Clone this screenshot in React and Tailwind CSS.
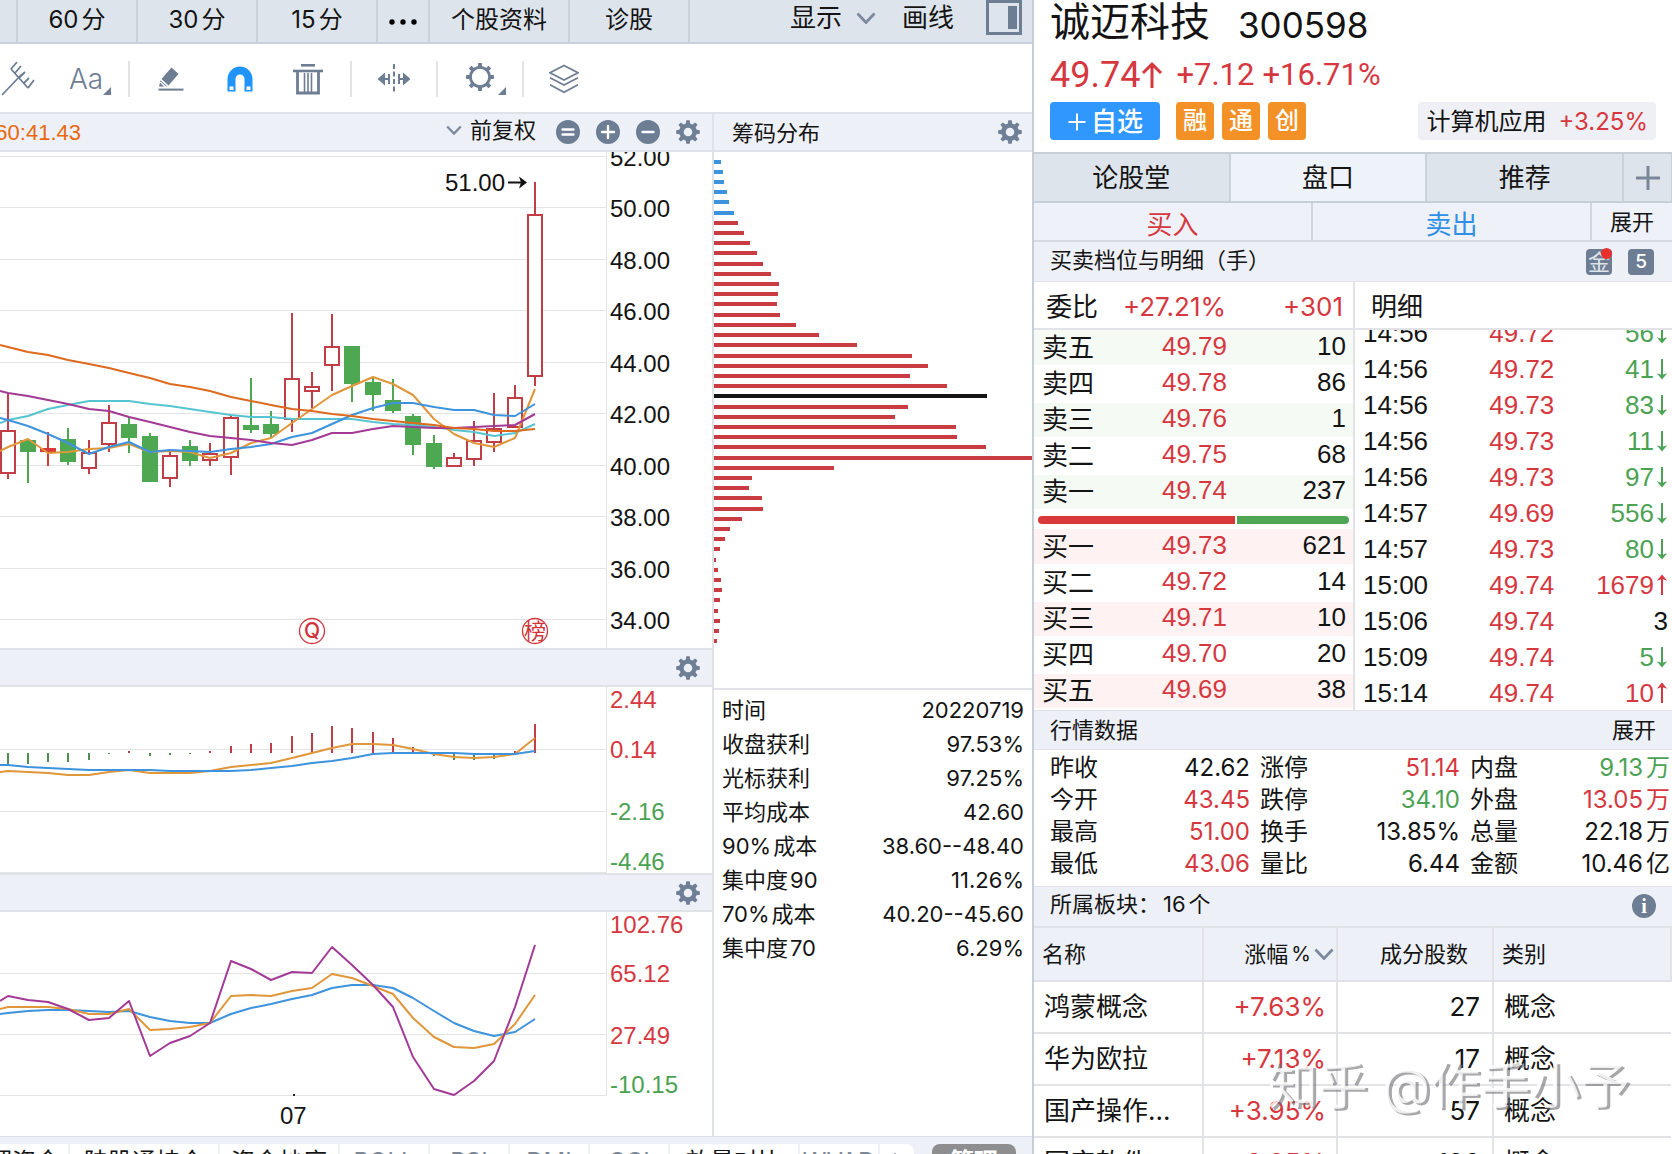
import React from "react";

const XS = [8, 28, 48, 68, 89, 109, 129, 150, 170, 190, 210, 231, 251, 271, 292, 312, 332, 352, 373, 393, 413, 434, 454, 474, 494, 515, 535];

// kind, high, low, body top, body bottom
const CANDLES = [
  ["r", 394, 479, 430, 474],
  ["g", 440, 483, 440, 452],
  ["f", 432, 466, 448, 452],
  ["g", 428, 465, 439, 462],
  ["r", 440, 474, 452, 469],
  ["r", 405, 452, 422, 445],
  ["g", 417, 453, 424, 438],
  ["g", 433, 482, 436, 482],
  ["r", 452, 487, 455, 479],
  ["g", 440, 466, 446, 461],
  ["r", 443, 466, 453, 461],
  ["r", 415, 475, 417, 458],
  ["g", 378, 433, 425, 430],
  ["g", 411, 437, 424, 434],
  ["r", 313, 432, 378, 420],
  ["r", 372, 408, 386, 392],
  ["r", 314, 391, 346, 366],
  ["g", 346, 402, 346, 384],
  ["g", 378, 411, 382, 395],
  ["g", 379, 413, 400, 411],
  ["g", 414, 455, 416, 445],
  ["g", 435, 469, 443, 467],
  ["r", 453, 467, 457, 467],
  ["r", 421, 466, 440, 460],
  ["r", 393, 452, 428, 443],
  ["r", 385, 428, 397, 428],
  ["r", 182, 386, 214, 377],
];

const MA = [
  ["#56c4d0", 423, [420, 416, 409, 405, 401, 401, 401, 404, 406, 409, 412, 415, 417, 417, 419, 419, 419, 419, 422, 424, 425, 427, 430, 432, 436, 433, 424]],
  ["#e0963a", 451, [447, 439, 453, 452, 449, 448, 444, 452, 451, 452, 458, 453, 443, 438, 423, 409, 395, 386, 377, 384, 395, 419, 434, 443, 447, 438, 389]],
  ["#3d93dd", 418, [420, 426, 434, 443, 454, 447, 442, 452, 450, 451, 452, 449, 447, 444, 437, 433, 424, 415, 408, 403, 403, 407, 410, 410, 415, 416, 404]],
  ["#a23a96", 391, [393, 396, 400, 404, 409, 411, 417, 422, 427, 432, 436, 438, 440, 443, 445, 440, 433, 433, 429, 426, 427, 428, 428, 427, 426, 425, 414]],
  ["#dd6a1f", 345, [347, 352, 355, 360, 364, 368, 373, 378, 384, 387, 391, 397, 401, 405, 409, 411, 414, 416, 419, 421, 423, 425, 428, 429, 431, 431, 429]],
];

const MACD_BARS = [765, 764, 762, 762, 760, 754, 751, 756, 755, 754, 751, 746, 744, 743, 736, 733, 726, 728, 732, 738, 747, 756, 760, 760, 759, 751, 724];
const MACD = [
  ["#e0963a", 772, [771, 772, 773, 775, 775, 772, 770, 773, 773, 773, 771, 767, 765, 763, 758, 753, 748, 744, 744, 745, 749, 754, 757, 758, 757, 754, 738]],
  ["#3d93dd", 765, [765, 767, 768, 769, 770, 770, 770, 770, 771, 771, 771, 771, 770, 768, 766, 763, 761, 758, 754, 753, 753, 753, 753, 754, 754, 754, 751]],
];

const KDJ = [
  ["#3d93dd", 1014, [1013, 1011, 1010, 1010, 1011, 1012, 1011, 1017, 1021, 1023, 1023, 1014, 1008, 1004, 999, 995, 988, 985, 985, 988, 998, 1011, 1023, 1031, 1036, 1032, 1019]],
  ["#e0963a", 1009, [1007, 1007, 1007, 1009, 1014, 1014, 1009, 1030, 1029, 1027, 1023, 996, 995, 996, 991, 988, 974, 978, 986, 994, 1018, 1037, 1047, 1048, 1044, 1024, 995]],
  ["#a23a96", 1001, [996, 1000, 1002, 1009, 1020, 1018, 1001, 1056, 1043, 1036, 1023, 961, 969, 980, 972, 973, 947, 965, 985, 1007, 1057, 1089, 1095, 1081, 1061, 1007, 945]],
];

const CHIPS = [
  [162, 7], [172, 9], [182, 10], [192, 13], [202, 15], [213, 20], [223, 24], [233, 30], [243, 36], [253, 43], [264, 49],
  [274, 57], [284, 65], [294, 64], [304, 63], [315, 66], [325, 82], [335, 105], [345, 143], [356, 198], [366, 214], [376, 196],
  [386, 233], [396, 273], [407, 194], [417, 181], [427, 242], [437, 243], [447, 272], [458, 319], [468, 120], [478, 38],
  [488, 35], [498, 48], [509, 49], [519, 28], [529, 16], [539, 11], [549, 6], [560, 2], [570, 4], [580, 7], [590, 8],
  [600, 6], [611, 4], [621, 6], [631, 5], [641, 3],
];

const SELLS = [["卖五", "49.79", "10"], ["卖四", "49.78", "86"], ["卖三", "49.76", "1"], ["卖二", "49.75", "68"], ["卖一", "49.74", "237"]];
const BUYS = [["买一", "49.73", "621"], ["买二", "49.72", "14"], ["买三", "49.71", "10"], ["买四", "49.70", "20"], ["买五", "49.69", "38"]];
const TICKS = [
  ["14:56", "49.72", "56", "d"], ["14:56", "49.72", "41", "d"], ["14:56", "49.73", "83", "d"], ["14:56", "49.73", "11", "d"],
  ["14:56", "49.73", "97", "d"], ["14:57", "49.69", "556", "d"], ["14:57", "49.73", "80", "d"], ["15:00", "49.74", "1679", "u"],
  ["15:06", "49.74", "3", ""], ["15:09", "49.74", "5", "d"], ["15:14", "49.74", "10", "u"],
];
const RED = "text-[#d6383f]";
const GREEN = "text-[#4ba253]";
const QUOTES = [
  ["昨收", "42.62", "", "", "涨停", "51.14", "", RED, "内盘", "9.13", "万", GREEN],
  ["今开", "43.45", "", RED, "跌停", "34.10", "", GREEN, "外盘", "13.05", "万", RED],
  ["最高", "51.00", "", RED, "换手", "13.85%", "", "", "总量", "22.18", "万", ""],
  ["最低", "43.06", "", RED, "量比", "6.44", "", "", "金额", "10.46", "亿", ""],
];
const STATS = [
  ["", "时间", "", "20220719"], ["", "收盘获利", "", "97.53%"], ["", "光标获利", "", "97.25%"], ["", "平均成本", "", "42.60"],
  ["90%", "成本", "", "38.60--48.40"], ["", "集中度", "90", "11.26%"], ["70%", "成本", "", "40.20--45.60"], ["", "集中度", "70", "6.29%"],
];
const SECTORS = [["鸿蒙概念", "+7.63%", "27"], ["华为欧拉", "+7.13%", "17"], ["国产操作...", "+3.95%", "57"], ["国产软件", "+3.85%", "186"]];

function Lines({ data }) {
  return data.map(([color, start, ys], i) => (
    <polyline key={i} fill="none" stroke={color} strokeWidth="2" strokeLinejoin="round"
      points={`0,${start} ` + ys.map((y, k) => `${XS[k]},${y}`).join(" ")} />
  ));
}

function Grid({ ys }) {
  return ys.map((y) => <line key={y} x1="0" x2="606" y1={y} y2={y} stroke="#e2e4e6" />);
}

function Gear({ className }) {
  return (
    <svg viewBox="0 0 24 24" className={className} aria-hidden="true">
      <circle cx="12" cy="12" r="6.5" fill="none" stroke="#6f7f96" strokeWidth="4.4" />
      {[0, 45, 90, 135, 180, 225, 270, 315].map((a) => (
        <path key={a} d="M10.3 0.2h3.4l0.7 4.2h-4.8z" fill="#6f7f96" transform={`rotate(${a} 12 12)`} />
      ))}
    </svg>
  );
}

function Chevron({ className }) {
  return (
    <svg viewBox="0 0 20 12" className={className} aria-hidden="true">
      <path d="M1.5 1.5 10 10.5 18.5 1.5" fill="none" stroke="#7c8aa0" strokeWidth="2.8" />
    </svg>
  );
}

function Disc({ label, children }) {
  return (
    <button aria-label={label} className="size-6">
      <svg viewBox="0 0 24 24" className="size-6">
        <circle cx="12" cy="12" r="12" fill="#6d7d94" />
        <g stroke="#fff" strokeWidth="2.4" strokeLinecap="round">{children}</g>
      </svg>
    </button>
  );
}

function Arrow({ up }) {
  return (
    <svg viewBox="0 0 12 22" className="h-[22px] w-3 shrink-0" aria-hidden="true">
      <g transform={up ? "rotate(180 6 11)" : undefined} fill="currentColor">
        <rect x="5" y="1" width="2" height="18" />
        <path d="M0.8 15.2 6 17l5.200-1.800L6 21.500z" />
      </g>
    </svg>
  );
}

function TopTab({ children, className }) {
  return <button className={"flex h-full shrink-0 items-center justify-center border-r-2 border-[#c9d1da] pb-0.5 " + className}>{children}</button>;
}

function Corner() {
  return (
    <svg viewBox="0 0 8 8" className="mt-6 size-2" aria-hidden="true"><path d="M8 0v8H0z" fill="#6d7d94" /></svg>
  );
}

function Toolbar() {
  const g = "#6d7d94";
  return (
    <div className="flex h-[68px] shrink-0 items-center pt-px pl-px">
      <button aria-label="音叉线">
        <svg viewBox="0 0 34 36" className="h-9 w-[34px]" fill="none" stroke={g} strokeWidth="1.800">
          <path d="M1 34 21 13M10 8 27 27M10 8l6-7M14 12l6-7M18 17l6-6M23 22l5-5M27 27l6-8" />
        </svg>
      </button>
      <button className="ml-[34px] flex items-center text-[#6d7d94]" aria-label="文字">
        <span className="font-['Inter'] text-[28px] leading-none font-light">Aa</span>
        <Corner />
      </button>
      <span className="ml-[17px] h-9 w-0.5 bg-[#e1e3e7]" />
      <button className="ml-7" aria-label="橡皮擦">
        <svg viewBox="0 0 26 26" className="size-[26px]">
          <path d="M13.500 1.500 20.500 8 10.500 19.500 3.500 13z" fill={g} />
          <path d="M2.500 14.200 9.300 20.600H1z" fill={g} />
          <path d="M2.200 16 7.800 21.200" stroke="#fff" strokeWidth="1.300" />
          <rect x="0.500" y="22.600" width="25" height="2" fill={g} />
        </svg>
      </button>
      <button className="ml-[43px]" aria-label="磁铁">
        <svg viewBox="0 0 26 26" className="size-[26px]">
          <path d="M0.500 25.500V13a12.500 12.500 0 0 1 25 0v12.500h-8V13a4.500 4.500 0 0 0-9 0v12.500z" fill="#2094fb" />
          <path d="M2.500 20.500h4v3.500h-4zM19.500 20.500h4v3.500h-4z" fill="#fff" />
        </svg>
      </button>
      <button className="ml-10" aria-label="删除">
        <svg viewBox="0 0 30 32" className="h-8 w-[30px]" fill="none" stroke={g}>
          <path d="M8 2.300h14" strokeWidth="2.600" />
          <path d="M0 8h30" strokeWidth="2.600" />
          <path d="M4.500 8v22h21V8" strokeWidth="2.800" />
          <path d="M11.500 10v19M15 10v19M18.500 10v19" strokeWidth="1.600" />
        </svg>
      </button>
      <span className="ml-[27px] h-9 w-0.5 bg-[#e1e3e7]" />
      <button className="ml-[25px]" aria-label="缩放">
        <svg viewBox="0 0 34 32" className="h-8 w-[34px]">
          <path d="M0.500 16 8 9.500v13zM33.500 16 26 9.500v13z" fill={g} />
          <path d="M7 16h5.500M21.500 16h5.500M12 11v10M22 11v10" stroke={g} strokeWidth="2" fill="none" />
          <path d="M17 1v30" stroke={g} strokeWidth="2" strokeDasharray="5 2.500" />
        </svg>
      </button>
      <span className="ml-[25px] h-9 w-0.5 bg-[#e1e3e7]" />
      <button className="ml-7 flex items-center" aria-label="设置">
        <svg viewBox="0 0 28 28" className="mb-1 size-7">
          <circle cx="14" cy="14" r="9.600" fill="none" stroke={g} strokeWidth="2.800" />
          {[0, 45, 90, 135, 180, 225, 270, 315].map((a) => (
            <rect key={a} x="12" y="0" width="4" height="4" rx="0.800" fill={g} transform={`rotate(${a} 14 14)`} />
          ))}
        </svg>
        <span className="w-1" />
        <Corner />
      </button>
      <span className="ml-4 h-9 w-0.5 bg-[#e1e3e7]" />
      <button className="ml-[25px]" aria-label="图层">
        <svg viewBox="0 0 30 30" className="size-[30px]" fill="none" stroke={g} strokeWidth="1.700">
          <path d="M15 1.500 29 8.800 15 16 1 8.800z" />
          <path d="M1 13.800 15 21l14-7.200" />
          <path d="M1 20.800 15 28.200l14-7.400" />
        </svg>
      </button>
    </div>
  );
}

function SubHeader() {
  return (
    <div className="flex h-[39px] shrink-0 items-center justify-end border-y-2 border-[#dfe3e8] bg-[#edf0f6] pr-3">
      <button aria-label="指标设置"><Gear className="size-6" /></button>
    </div>
  );
}

function Axis({ labels }) {
  return (
    <div className="w-[105px] shrink-0 pt-px pl-[3px] font-['Liberation_Sans'] text-2xl leading-6">
      {labels.map(([t, c]) => <div key={t} className={c}>{t}</div>)}
    </div>
  );
}

function Charts() {
  return (
    <section className="flex min-w-0 flex-1 flex-col">
      <div className="flex h-10 shrink-0 items-center justify-between border-y-2 border-[#dfe3e8] bg-[#edf0f6] pr-3">
        <div className="flex w-[81px] justify-end overflow-hidden font-['Liberation_Sans'] text-[22px] whitespace-nowrap text-[#e8690f]">MA60:41.43</div>
        <div className="flex items-center gap-4">
          <button className="flex items-center gap-2 pr-1 pb-1 text-[22px] leading-8"><Chevron className="h-2.5 w-4" />前复权</button>
          <Disc label="还原"><path d="M6.500 9.500h11M6.500 14.500h11" /></Disc>
          <Disc label="放大"><path d="M6 12h12M12 6v12" /></Disc>
          <Disc label="缩小"><path d="M6.500 12h11" /></Disc>
          <button aria-label="设置"><Gear className="size-6" /></button>
        </div>
      </div>
      <div className="flex h-[496px] shrink-0">
        <svg viewBox="0 152 606 496" preserveAspectRatio="none" className="h-full min-w-0 flex-1 border-r border-[#e2e4e6]" role="img" aria-label="日K线图">
          <Grid ys={[156.5, 207.5, 259.5, 310.5, 362.5, 413.5, 465.5, 516.5, 568.5, 619.5]} />
          {CANDLES.map(([k, hi, lo, t, b], i) => {
            const x = XS[i];
            const c = k === "g" ? "#4ea852" : k === "f" ? "#d93a35" : "#c23d46";
            return (
              <g key={i}>
                <line x1={x} x2={x} y1={hi} y2={lo} stroke={c} strokeWidth="2" />
                {k === "r"
                  ? <rect x={x - 7} y={t + 1} width="14" height={b - t - 2} fill="#fff" stroke={c} strokeWidth="2" />
                  : <rect x={x - 8} y={t} width="16" height={b - t} fill={c} />}
              </g>
            );
          })}
          <Lines data={MA} />
          <text x="445" y="191" fontFamily="Liberation Sans" fontSize="24" fill="#111">51.00</text>
          <path d="M508 182.500h14" stroke="#111" strokeWidth="2" />
          <path d="M519 176.500 527 182.500 519 188.500 521 182.500z" fill="#111" />
          {[[312, "Q", 21], [535, "榜", 22]].map(([x, t, s]) => (
            <g key={t} fill="#d2343c">
              <circle cx={x} cy="631" r="12.500" fill="#fff" stroke="#d2343c" strokeWidth="1.300" />
              <text x={x} y={t === "Q" ? 638 : 639} textAnchor="middle" fontFamily="Inter, 'Noto Sans CJK SC', sans-serif" fontWeight={t === "Q" ? 500 : 400} fontSize={s}>{t}</text>
            </g>
          ))}
        </svg>
        <div className="w-[105px] shrink-0 overflow-hidden pl-[3px] font-['Liberation_Sans'] text-2xl leading-6">
          <div className="-mt-1.5 flex h-[487px] flex-col justify-between">
            {["52.00", "50.00", "48.00", "46.00", "44.00", "42.00", "40.00", "38.00", "36.00", "34.00"].map((v) => <div key={v}>{v}</div>)}
          </div>
        </div>
      </div>
      <SubHeader />
      <div className="flex h-[186px] shrink-0">
        <svg viewBox="0 687 606 186" preserveAspectRatio="none" className="h-full min-w-0 flex-1 border-r border-[#e2e4e6]" role="img" aria-label="MACD">
          <Grid ys={[749.5, 811.5, 872.5]} />
          {MACD_BARS.map((y, i) => (
            <line key={i} x1={XS[i]} x2={XS[i]} y1="753" y2={y} stroke={y > 753 ? "#4c8f4e" : "#c23d46"} strokeWidth="2" />
          ))}
          <Lines data={MACD} />
        </svg>
        <Axis labels={[["2.44", RED], ["0.14", RED + " mt-[26px]"], ["-2.16", GREEN + " mt-[38px]"], ["-4.46", GREEN + " mt-[26px]"]]} />
      </div>
      <SubHeader />
      <div className="flex h-[184px] shrink-0">
        <svg viewBox="0 912 606 184" preserveAspectRatio="none" className="h-full min-w-0 flex-1 border-r border-[#e2e4e6]" role="img" aria-label="KDJ">
          <Grid ys={[973.5, 1034.5, 1095.5]} />
          <Lines data={KDJ} />
          <rect x="293" y="1094" width="2" height="2" fill="#222" />
        </svg>
        <Axis labels={[["102.76", RED], ["65.12", RED + " mt-[25px]"], ["27.49", RED + " mt-[38px]"], ["-10.15", GREEN + " mt-[25px]"]]} />
      </div>
      <div className="flex h-10 shrink-0 items-center pl-[280px] font-['Liberation_Sans'] text-2xl">07</div>
    </section>
  );
}

function ChipPanel() {
  return (
    <section className="flex w-80 shrink-0 flex-col border-l-2 border-[#dfe3e8]">
      <div className="flex h-10 shrink-0 items-center justify-between border-y-2 border-[#dfe3e8] bg-[#edf0f6] pr-2.5 pl-[18px]">
        <h2 className="pt-0.5 text-[22px] leading-8">筹码分布</h2>
        <button aria-label="筹码设置"><Gear className="size-6" /></button>
      </div>
      <svg viewBox="0 152 318 536" preserveAspectRatio="none" className="h-[536px] w-full shrink-0" role="img" aria-label="筹码分布图">
        {CHIPS.map(([y, w]) => (
          <rect key={y} x="0" y={y - 2} width={w} height="4" fill={y < 218 ? "#3d93dd" : y === 396 ? "#151515" : "#c93c42"} />
        ))}
      </svg>
      <dl className="border-t-2 border-[#dfe3e8] pt-[3px] pr-2 pl-2">
        {STATS.map(([pre, name, post, value]) => (
          <div key={pre + name + post} className="flex h-[34px] items-center justify-between">
            <dt className="flex items-center gap-0.5 text-[22px] leading-8">
              {pre && <span>{pre}</span>}{name}{post && <span>{post}</span>}
            </dt>
            <dd className="text-[22px] leading-8">{value}</dd>
          </div>
        ))}
      </dl>
    </section>
  );
}

function BottomTabs() {
  const t = "flex h-full shrink-0 items-center justify-center border-r-2 border-[#edf0f4] bg-white ";
  const gray = " text-[#7e8794]";
  return (
    <nav className="flex h-[43px] shrink-0 border-t border-[#dcdfe4] bg-[#edf0f6] pt-[7px] text-2xl leading-8">
      <button className={t + "w-[70px] overflow-hidden pr-5 whitespace-nowrap"}><span className="shrink-0">超资金</span></button>
      <button className={t + "w-[150px]"}>陆股通持仓</button>
      <button className={t + "w-[120px]"}>资金抄底</button>
      <button className={t + "w-[90px]" + gray}>BOLL</button>
      <button className={t + "w-20" + gray}>RSI</button>
      <button className={t + "w-20" + gray}>DMI</button>
      <button className={t + "w-20" + gray}>CCI</button>
      <button className={t + "w-[130px]"}>放量对比</button>
      <button className={t + "w-20" + gray}>WVAD</button>
      <button className="flex w-[34px] items-center justify-center rounded-r-lg bg-white text-[#4b5565]" aria-label="更多指标">
        <svg viewBox="0 0 10 20" className="h-5 w-2.5" fill="none" stroke="currentColor" strokeWidth="3"><path d="m2 2 6 8-6 8" /></svg>
      </button>
      <button className="ml-[18px] w-[84px] rounded-lg bg-[#8e8e90] font-bold text-white">管理</button>
    </nav>
  );
}

function LeftPane() {
  return (
    <main className="flex min-w-0 flex-1 flex-col">
      <nav className="flex h-11 shrink-0 items-center border-b-2 border-[#c9d1da] bg-[#dee4eb] text-2xl leading-8">
        <TopTab className="w-[18px]" />
        {["60", "30", "15"].map((n) => (
          <TopTab key={n} className="w-[120px] gap-[3px]"><span>{n}</span>分</TopTab>
        ))}
        <TopTab className="w-[52px]">
          <svg viewBox="0 0 28 6" className="mt-1 h-1.5 w-7" aria-label="更多" role="img"><circle cx="3" cy="3" r="2.700" /><circle cx="14" cy="3" r="2.700" /><circle cx="25" cy="3" r="2.700" /></svg>
        </TopTab>
        <TopTab className="w-[140px]">个股资料</TopTab>
        <TopTab className="w-[120px]">诊股</TopTab>
        <div className="flex flex-1 items-center justify-end pr-2.5 pb-1.5 text-[26px]">
          <button className="flex items-center gap-[14px]">显示<Chevron className="h-3 w-5" /></button>
          <button className="ml-[26px]">画线</button>
          <button className="ml-8" aria-label="切换侧栏">
            <svg viewBox="0 0 36 36" className="size-9">
              <rect x="1.500" y="1.500" width="33" height="32" fill="none" stroke="#6d7d94" strokeWidth="3" />
              <rect x="22" y="6" width="9" height="23" fill="#6d7d94" />
            </svg>
          </button>
        </div>
      </nav>
      <Toolbar />
      <div className="flex shrink-0">
        <Charts />
        <ChipPanel />
      </div>
      <BottomTabs />
    </main>
  );
}

function BookRows({ rows, tint }) {
  return (
    <table className="w-full table-fixed border-collapse">
      <colgroup><col className="w-[74px]" /><col className="w-[119px]" /><col /></colgroup>
      <tbody>
        {rows.map(([n, p, q], i) => (
          <tr key={n} className={"h-9 border-b-2 border-white " + (i % 2 === 0 ? tint : "")}>
            <th scope="row" className="p-0 pl-2 text-left text-[26px] leading-8 font-normal">{n}</th>
            <td className={"p-0 pb-1 text-right font-['Liberation_Sans'] text-[26px] leading-7 " + RED}>{p}</td>
            <td className="p-0 pr-[7px] pb-1 text-right font-['Liberation_Sans'] text-[26px] leading-7">{q}</td>
          </tr>
        ))}
      </tbody>
    </table>
  );
}

function OrderBook() {
  return (
    <div className="flex h-[428px] shrink-0 overflow-hidden">
      <section className="w-[321px] shrink-0 border-r-2 border-[#e1e3e6]">
        <div className="flex h-12 items-center border-b-2 border-[#e1e3e6] pt-1 pr-2.5 pl-3 text-[26px] leading-8">
          <span>委比</span>
          <span className={"flex-1 text-right " + RED}>+27.21%</span>
          <span className={"w-[117px] text-right " + RED}>+301</span>
        </div>
        <BookRows rows={SELLS} tint="bg-[#f5faf5]" />
        <div className="flex h-[18px] items-center gap-0.5 pr-1 pl-1">
          <span className="h-2 flex-[63.800] rounded-l-full bg-[#d9383a]" />
          <span className="h-2 flex-[36.200] rounded-r-full bg-[#4fa556]" />
        </div>
        <BookRows rows={BUYS} tint="bg-[#fef3f2]" />
      </section>
      <section className="flex-1">
        <h3 className="flex h-12 items-center border-b-2 border-[#e1e3e6] pt-1 pl-4 text-[26px] leading-8">明细</h3>
        <div className="overflow-hidden">
          <table className="-mt-[15px] w-full table-fixed font-['Liberation_Sans'] text-[26px] leading-7">
            <tbody>
              {TICKS.map(([t, p, v, d], i) => (
                <tr key={i} className="h-9">
                  <td className="p-0 pl-2">{t}</td>
                  <td className={"p-0 pr-3 text-right " + RED}>{p}</td>
                  <td className="p-0 pr-1">
                    <span className={"flex items-center justify-end gap-0.5 " + (d === "u" ? RED : d === "d" ? GREEN : "")}>
                      {v}{d && <Arrow up={d === "u"} />}
                    </span>
                  </td>
                </tr>
              ))}
            </tbody>
          </table>
        </div>
      </section>
    </div>
  );
}

function SideTab({ active, children }) {
  return (
    <button role="tab" aria-selected={!!active} className={"flex-1 border-r-2 border-[#c9d1da] pt-px " + (active ? "bg-[#eef2f9]" : "")}>{children}</button>
  );
}

function Quote({ v, unit, color, className }) {
  return (
    <dd className={"flex items-center justify-end gap-[3px] " + className + " " + color}>
      <span>{v}</span>{unit}
    </dd>
  );
}

function RightPane() {
  const cell = "border-r-2 border-[#e1e3e6] ";
  return (
    <aside className="relative flex w-[640px] shrink-0 flex-col border-l-2 border-[#c6ced8]">
      <header className="shrink-0 pl-4">
        <div className="flex h-11 items-center gap-7">
          <h1 className="text-[40px] leading-[44px]">诚迈科技</h1>
          <span className="pt-1.5 text-[35px] leading-10">300598</span>
        </div>
        <div className={"flex h-[58px] items-center pt-1 font-['Roboto'] " + RED}>
          <span className="text-4xl">49.74</span>
          <svg viewBox="0 0 24 28" className="h-7 w-6" fill="none" stroke="currentColor" strokeWidth="3" aria-label="上涨" role="img"><path d="M12 27V3M3 12l9-9 9 9" /></svg>
          <span className="pl-3 text-[31px]">+7.12</span>
          <span className="pl-2 text-[31px]">+16.71%</span>
        </div>
        <div className="flex h-[38px] items-center pr-4">
          <button className="flex h-full w-[110px] items-center justify-center gap-1 rounded bg-[#2f97ff] pt-0.5 text-[26px] leading-8 font-medium text-white">
            <svg viewBox="0 0 20 20" className="size-5" aria-hidden="true"><path d="M1.500 10h17M10 1.500v17" stroke="#fff" strokeWidth="2" /></svg>
            自选
          </button>
          <div className="flex h-full gap-2 pl-4 text-2xl leading-8 font-medium text-white">
            {["融", "通", "创"].map((t) => <span key={t} className="flex w-[38px] items-center justify-center rounded bg-[#f39126]">{t}</span>)}
          </div>
          <a href="#industry" className="ml-auto flex h-full items-center gap-3 rounded bg-[#eff0f6] px-2 pt-0.5 text-2xl leading-8">计算机应用<span className={RED}>+3.25%</span></a>
        </div>
      </header>

      <div role="tablist" className="mt-3 flex h-[51px] shrink-0 border-y-2 border-[#c6ced8] bg-[#dee4eb] text-[26px] leading-8">
        <SideTab>论股堂</SideTab>
        <SideTab active>盘口</SideTab>
        <SideTab>推荐</SideTab>
        <button className="flex w-12 items-center justify-center border-r border-[#c9d1da]" aria-label="添加">
          <svg viewBox="0 0 24 24" className="size-6"><path d="M0 12h24M12 0v24" stroke="#7a879b" strokeWidth="3" /></svg>
        </button>
      </div>
      <div className="flex h-[39px] shrink-0 border-b-2 border-[#d5dae1] bg-[#eef1f7] text-[26px] leading-8">
        <button className={"flex-1 border-r-2 border-[#d0d6de] pt-1.5 " + RED}>买入</button>
        <button className="flex-1 border-r-2 border-[#d0d6de] pt-1.5 text-[#2f8fe6]">卖出</button>
        <button className="w-20 text-[22px]">展开</button>
      </div>
      <div className="flex h-10 shrink-0 items-center border-b border-[#dfe3e8] bg-[#edf0f6] pr-[18px] pl-4">
        <h2 className="flex-1 pb-1 text-[22px] leading-8">买卖档位与明细（手）</h2>
        <button className="relative flex size-[26px] items-center justify-center rounded bg-[#6d7d94] text-[22px] leading-6 text-[#dfe4ea]">金
          <span className="absolute -top-px right-0 size-[11px] rounded-full bg-[#e8312f]" />
        </button>
        <button className="ml-4 size-[26px] rounded bg-[#6d7d94] text-[19px] leading-6 font-medium text-white">5</button>
      </div>

      <OrderBook />

      <div className="flex h-10 shrink-0 items-center justify-between border-y border-[#dfe3e8] bg-[#edf0f6] pr-4 pl-4 text-[22px] leading-8">
        <h2>行情数据</h2>
        <button>展开</button>
      </div>
      <dl className="h-[136px] shrink-0 pt-0.5 pr-0.5 pl-4 text-2xl leading-8">
        {QUOTES.map((r) => (
          <div key={r[0]} className="flex h-8 items-center">
            <dt>{r[0]}</dt><Quote v={r[1]} unit={r[2]} color={r[3]} className="flex-1" />
            <dt className="pl-2.5">{r[4]}</dt><Quote v={r[5]} unit={r[6]} color={r[7]} className="flex-1" />
            <dt className="pl-2.5">{r[8]}</dt><Quote v={r[9]} unit={r[10]} color={r[11]} className="flex-1" />
          </div>
        ))}
      </dl>
      <div className="flex h-10 shrink-0 items-center border-t border-[#dfe3e8] bg-[#edf0f6] pr-4 pb-0.5 pl-4 text-[22px] leading-8">
        <h2 className="flex flex-1 gap-[3px] pb-1">所属板块：<span>16</span>个</h2>
        <button aria-label="说明" className="size-6 rounded-full bg-[#6d7d94] font-['Liberation_Serif'] text-xl leading-6 font-bold text-white">i</button>
      </div>
      <table className="w-full shrink-0 table-fixed border-collapse">
        <colgroup><col className="w-[169px]" /><col className="w-[134px]" /><col className="w-[156px]" /><col /></colgroup>
        <thead>
          <tr className="h-[54px] border-y-2 border-[#dfe2e7] bg-[#edf0f6] text-[22px] leading-8">
            <th className={cell + "p-0 pl-2 text-left font-normal"}>名称</th>
            <th className={cell + "p-0 pr-0.5 font-normal"}>
              <button className="flex w-full items-center justify-end gap-[3px]">涨幅<span className="text-xl">%</span><Chevron className="h-3 w-5" /></button>
            </th>
            <th className={cell + "p-0 pr-6 text-right font-normal"}>成分股数</th>
            <th className={cell + "p-0 pl-2 text-left font-normal"}>类别</th>
          </tr>
        </thead>
        <tbody>
          {SECTORS.map(([n, p, c]) => (
            <tr key={n} className="h-[52px] border-b-2 border-[#e1e3e6] text-[26px] leading-8">
              <td className={cell + "p-0 pl-2.5 whitespace-nowrap"}>{n}</td>
              <td className={cell + "p-0 pr-2.5 text-right " + RED}>{p}</td>
              <td className={cell + "p-0 pr-3 text-right"}>{c}</td>
              <td className="p-0 pl-2.5">概念</td>
            </tr>
          ))}
        </tbody>
      </table>
      <div className="pointer-events-none absolute top-[1050px] right-[42px] text-[50px] leading-[72px] whitespace-nowrap text-white/80 [text-shadow:3px_2px_0_rgba(110,110,115,0.6)]">知乎 @作手小予</div>
    </aside>
  );
}

export default function App() {
  return (
    <div className="flex h-screen overflow-hidden bg-white font-['Inter','Noto_Sans_CJK_SC',sans-serif] text-[#141414]">
      <LeftPane />
      <RightPane />
    </div>
  );
}
